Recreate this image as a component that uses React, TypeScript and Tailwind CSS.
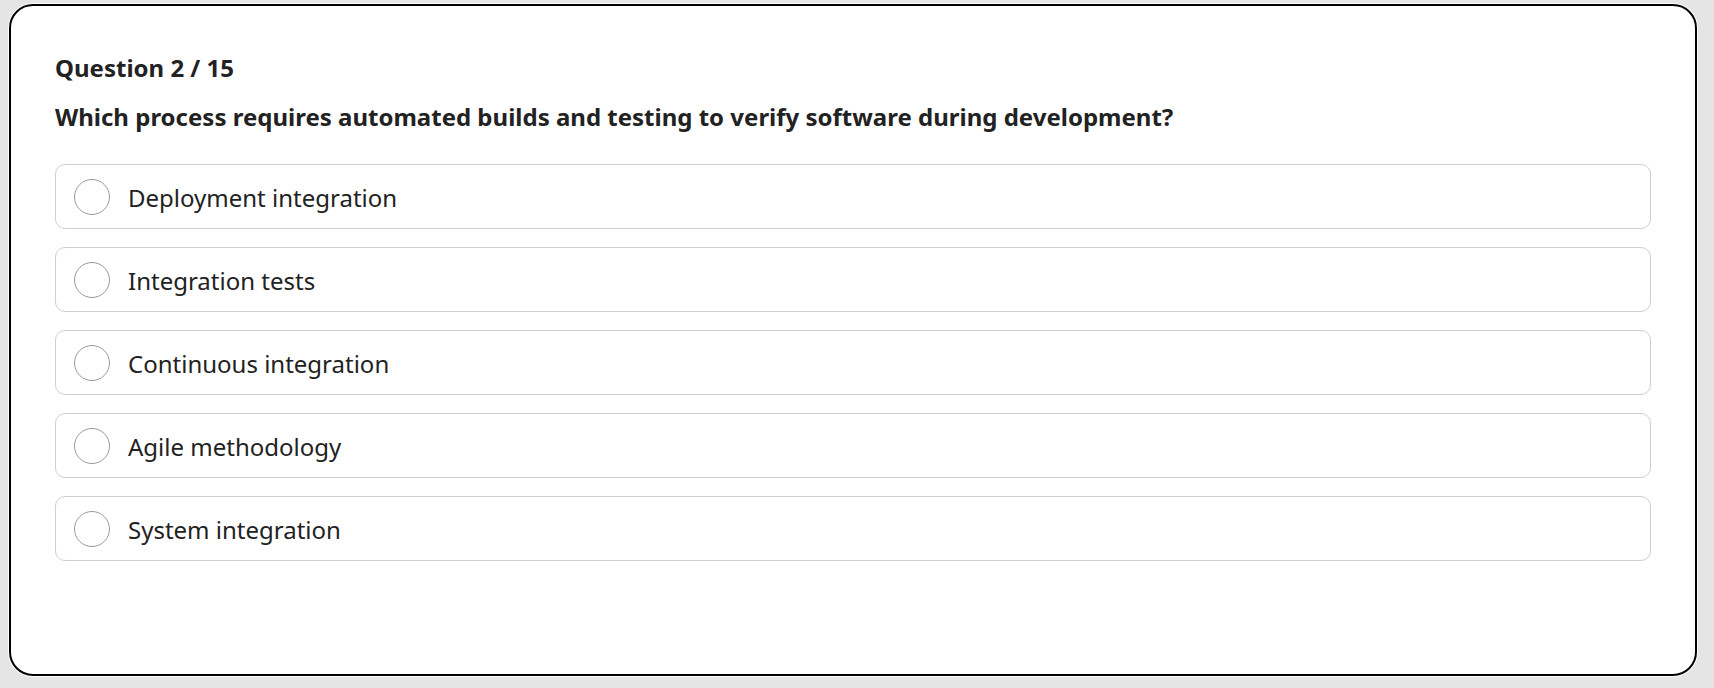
import { useState } from 'react';

const options = [
  'Deployment integration',
  'Integration tests',
  'Continuous integration',
  'Agile methodology',
  'System integration',
];

export default function App() {
  const [selected, setSelected] = useState<number | null>(null);

  return (
    <div className="min-h-screen bg-[#e5e5e5] pl-[9px] pt-[4px] font-['Noto_Sans',sans-serif] text-[#222]">
      <div className="w-[1688px] h-[672px] rounded-[24px] border-2 border-black bg-white shadow-[0_0_0_1px_#ffffff] px-[44px] pt-[44px]">
        {/* Header */}
        <h2 className="text-[24px] font-bold leading-[36px]">Question 2 / 15</h2>
        <p className="mt-[13px] text-[24px] font-bold leading-[36px]">
          Which process requires automated builds and testing to verify software during development?
        </p>

        {/* Options */}
        <div className="mt-[29px] flex flex-col gap-[18px]">
          {options.map((opt, i) => (
            <button
              key={opt}
              onClick={() => setSelected(i)}
              className="flex h-[65px] items-center gap-[18px] rounded-[10px] border border-[#cfcfcf] bg-white pl-[18px] text-left"
            >
              <span
                className={`h-[36px] w-[36px] shrink-0 rounded-full border ${
                  selected === i ? 'border-[#222] bg-[#222]' : 'border-[#999]'
                }`}
              />
              <span className="pt-[2px] text-[24px] leading-none">{opt}</span>
            </button>
          ))}
        </div>
      </div>
    </div>
  );
}
